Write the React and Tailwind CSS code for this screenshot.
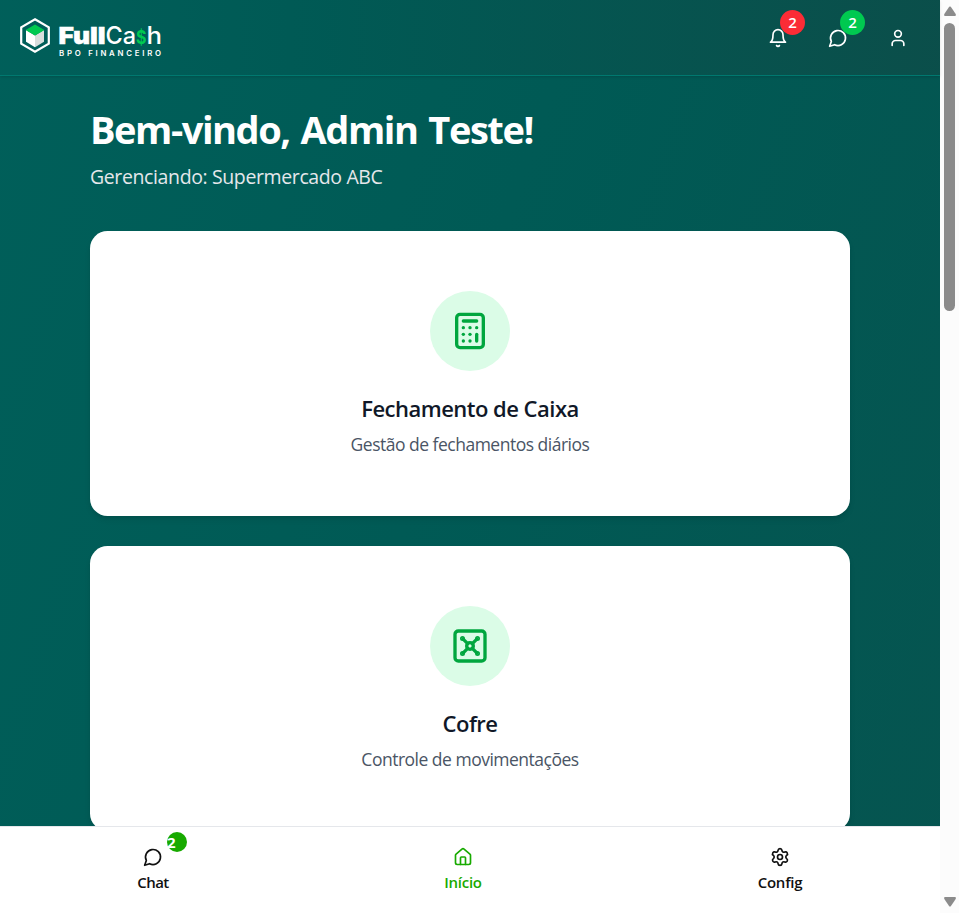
import { Calculator, Vault, House, Settings, User } from "lucide-react";

function BellIcon() {
  return (
    <svg viewBox="0 0 24 24" className="size-5" fill="none" stroke="currentColor" strokeWidth="2" strokeLinecap="round" strokeLinejoin="round">
      <path d="M6 8a6 6 0 0 1 12 0c0 7 3 9 3 9H3s3-2 3-9" />
      <path d="M10.3 21a1.94 1.94 0 0 0 3.4 0" />
    </svg>
  );
}

function ChatIcon() {
  return (
    <svg viewBox="0 0 24 24" className="size-5" fill="none" stroke="currentColor" strokeWidth="2" strokeLinecap="round" strokeLinejoin="round">
      <path d="M7.9 20A9 9 0 1 0 4 16.1L2 22Z" />
    </svg>
  );
}

function Logo() {
  return (
    <svg viewBox="0 0 145 44" className="h-11 w-[145px]" role="img" aria-label="FullCash BPO Financeiro">
      <path d="M15 3.3 28.8 11.3V27.7L15 35.7 1.2 27.7V11.3Z" fill="none" stroke="#fff" strokeWidth="2.2" />
      <path d="M6 14 15 19.5V31.2L6 25.8Z" fill="#ffffff" />
      <path d="M24 14 15 19.5V31.2L24 25.8Z" fill="#d9dedd" />
      <path d="M15 8.6 24.4 14 15 19.6 5.6 14Z" fill="#00c950" />
      <g fontFamily="Inter, 'Liberation Sans', sans-serif" fill="#fff">
        <text x="38.5" y="28.3" fontSize="23" fontWeight="900" stroke="#fff" strokeWidth="0.5" textLength="47" lengthAdjust="spacingAndGlyphs">Full</text>
        <text x="85.5" y="28.3" fontSize="24" fontWeight="500" textLength="30.5" lengthAdjust="spacingAndGlyphs">Ca</text>
        <text x="116" y="28.3" fontSize="19" fontWeight="700" fill="#00c950" textLength="10.5" lengthAdjust="spacingAndGlyphs">$</text>
        <text x="126.5" y="28.3" fontSize="24" fontWeight="500" textLength="15.5" lengthAdjust="spacingAndGlyphs">h</text>
        <text x="39" y="40" fontSize="7.8" fontWeight="600" textLength="102">BPO FINANCEIRO</text>
      </g>
    </svg>
  );
}

function ServiceCard({ icon: Icon, title, text }) {
  return (
    <section className="flex h-[285px] shrink-0 flex-col items-center rounded-[17.5px] bg-white pt-[60px] text-center shadow-md">
      <div className="flex size-20 items-center justify-center rounded-full bg-green-100 text-green-600">
        <Icon size={40} strokeWidth={2} />
      </div>
      <h2 className="mt-[22px] whitespace-nowrap text-[22px] leading-[30px] font-semibold tracking-[-0.52px] text-gray-900">{title}</h2>
      <p className="mt-[7px] whitespace-nowrap text-[17.5px] leading-7 tracking-[-0.5px] text-gray-600">{text}</p>
    </section>
  );
}

export default function App() {
  return (
    <div className="flex h-[913px] w-[959px] overflow-hidden bg-white font-['Open_Sans','Noto_Sans',sans-serif]">
      <div className="flex w-[940px] flex-col bg-linear-to-br from-teal-800 to-teal-900 bg-[length:940px_2770px] bg-no-repeat">
        <header className="z-10 flex h-[76px] shrink-0 items-start justify-between border-b border-teal-700 bg-linear-to-r from-teal-800 to-teal-900 pt-4 pr-8 pl-5 text-white shadow-sm">
          <Logo />
          <div className="flex gap-10 pt-3 text-white">
            <div className="relative">
              <BellIcon />
              <span className="absolute -top-[18px] left-3 flex size-[25px] items-center justify-center rounded-full bg-[#fb2c36] text-[15px] font-semibold">2</span>
            </div>
            <div className="relative">
              <ChatIcon />
              <span className="absolute -top-[18px] left-3 flex size-[25px] items-center justify-center rounded-full bg-[#00c950] text-[15px] font-semibold">2</span>
            </div>
            <User size={20} />
          </div>
        </header>

        <main className="flex h-[750px] shrink-0 flex-col overflow-hidden px-[90px] pt-[28px]">
          <h1 className="whitespace-nowrap text-[38px] leading-[50px] font-bold tracking-[-1.45px] [word-spacing:2.5px] text-white">Bem-vindo, Admin Teste!</h1>
          <p className="mt-[9px] mb-[40px] whitespace-nowrap text-[19.5px] leading-7 tracking-[-0.38px] text-gray-200">Gerenciando: Supermercado ABC</p>
          <div className="flex flex-col gap-[30px]">
            <ServiceCard icon={Calculator} title="Fechamento de Caixa" text="Gestão de fechamentos diários" />
            <ServiceCard icon={Vault} title="Cofre" text="Controle de movimentações" />
          </div>
        </main>

        <nav className="flex h-[87px] shrink-0 border-t border-gray-200 bg-white pt-5 pl-[113px] text-[15px] font-semibold tracking-[-0.25px] text-[#111]">
          <div className="flex w-20 flex-col items-center gap-1">
            <div className="relative">
              <ChatIcon />
              <span className="absolute -top-[15px] left-6 flex size-5 items-center rounded-full bg-[#18aa00] text-[15px] leading-5 font-bold text-white">2</span>
            </div>
            <span className="leading-[22px] tracking-[-0.6px]">Chat</span>
          </div>
          <div className="ml-[230px] flex w-20 flex-col items-center gap-1 text-[#18aa00]">
            <House size={20} />
            <span className="leading-[22px]">Início</span>
          </div>
          <div className="ml-[237px] flex w-20 flex-col items-center gap-1">
            <Settings size={20} />
            <span className="leading-[22px]">Config</span>
          </div>
        </nav>
      </div>

      <div className="flex w-[19px] flex-col items-center bg-[#fcfcfc] text-[#8b8b8b]">
        <svg viewBox="0 0 12 10" className="mt-[6px] h-[10px] w-3"><path d="M5.2.8Q6 0 6.8.8L11.7 8Q12.3 10 11 10H1Q-.3 10 .3 8Z" fill="currentColor" /></svg>
        <div className="mt-[7px] h-72 w-[11px] rounded-full bg-[#8b8b8b]" />
        <svg viewBox="0 0 12 10" className="mt-auto mb-[6px] h-[10px] w-3 rotate-180"><path d="M5.2.8Q6 0 6.8.8L11.7 8Q12.3 10 11 10H1Q-.3 10 .3 8Z" fill="currentColor" /></svg>
      </div>
    </div>
  );
}
